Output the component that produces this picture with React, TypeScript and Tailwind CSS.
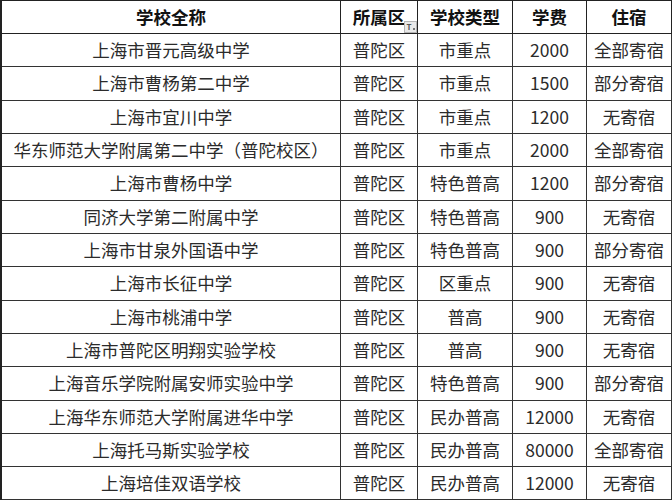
const rows: string[][] = [
  ["上海市晋元高级中学", "普陀区", "市重点", "2000", "全部寄宿"],
  ["上海市曹杨第二中学", "普陀区", "市重点", "1500", "部分寄宿"],
  ["上海市宜川中学", "普陀区", "市重点", "1200", "无寄宿"],
  ["华东师范大学附属第二中学（普陀校区）", "普陀区", "市重点", "2000", "全部寄宿"],
  ["上海市曹杨中学", "普陀区", "特色普高", "1200", "部分寄宿"],
  ["同济大学第二附属中学", "普陀区", "特色普高", "900", "无寄宿"],
  ["上海市甘泉外国语中学", "普陀区", "特色普高", "900", "部分寄宿"],
  ["上海市长征中学", "普陀区", "区重点", "900", "无寄宿"],
  ["上海市桃浦中学", "普陀区", "普高", "900", "无寄宿"],
  ["上海市普陀区明翔实验学校", "普陀区", "普高", "900", "无寄宿"],
  ["上海音乐学院附属安师实验中学", "普陀区", "特色普高", "900", "部分寄宿"],
  ["上海华东师范大学附属进华中学", "普陀区", "民办普高", "12000", "无寄宿"],
  ["上海托马斯实验学校", "普陀区", "民办普高", "80000", "全部寄宿"],
  ["上海培佳双语学校", "普陀区", "民办普高", "12000", "无寄宿"],
];

const headers = ["学校全称", "所属区", "学校类型", "学费", "住宿"];

// heights incl. bottom border, so the grid lines fall on 33/66/100...
const rowHeight = (r: number) =>
  r === rows.length - 1 ? "h-[33px]" : (r + 1) % 3 === 2 ? "h-[34px]" : "h-[33px]";

function FilterIcon() {
  return (
    <span className="absolute right-0 bottom-0 flex h-[12px] w-[13px] items-center justify-center border border-[#b5b5b5] bg-[#e9e9e9]">
      <span className="text-[8px] leading-none font-bold text-[#555]">T</span>
      <span className="ml-px mt-[4px] h-[2px] w-[2px] bg-[#777]" />
    </span>
  );
}

export default function App() {
  return (
    <div
      className="w-[672px] h-[500px] overflow-hidden bg-white text-[17.5px] text-[#2b2b2b]"
      style={{ fontFamily: '"Noto Sans CJK SC", "Noto Sans", sans-serif' }}
    >
      <div className="grid grid-cols-[339px_77px_95px_74px_85px] border-t border-l-2 border-[#222]">
        {headers.map((h, i) => (
          <div
            key={h}
            className="relative flex h-[33px] items-center justify-center border-r border-b border-[#222] font-bold text-[#111]"
          >
            {h}
            {i === 1 && <FilterIcon />}
          </div>
        ))}
        {rows.map((row, r) =>
          row.map((cell, c) => (
            <div
              key={r + "-" + c}
              className={
                "flex items-center justify-center border-r border-b border-[#333] whitespace-nowrap " +
                rowHeight(r)
              }
            >
              {cell}
            </div>
          ))
        )}
      </div>
    </div>
  );
}
